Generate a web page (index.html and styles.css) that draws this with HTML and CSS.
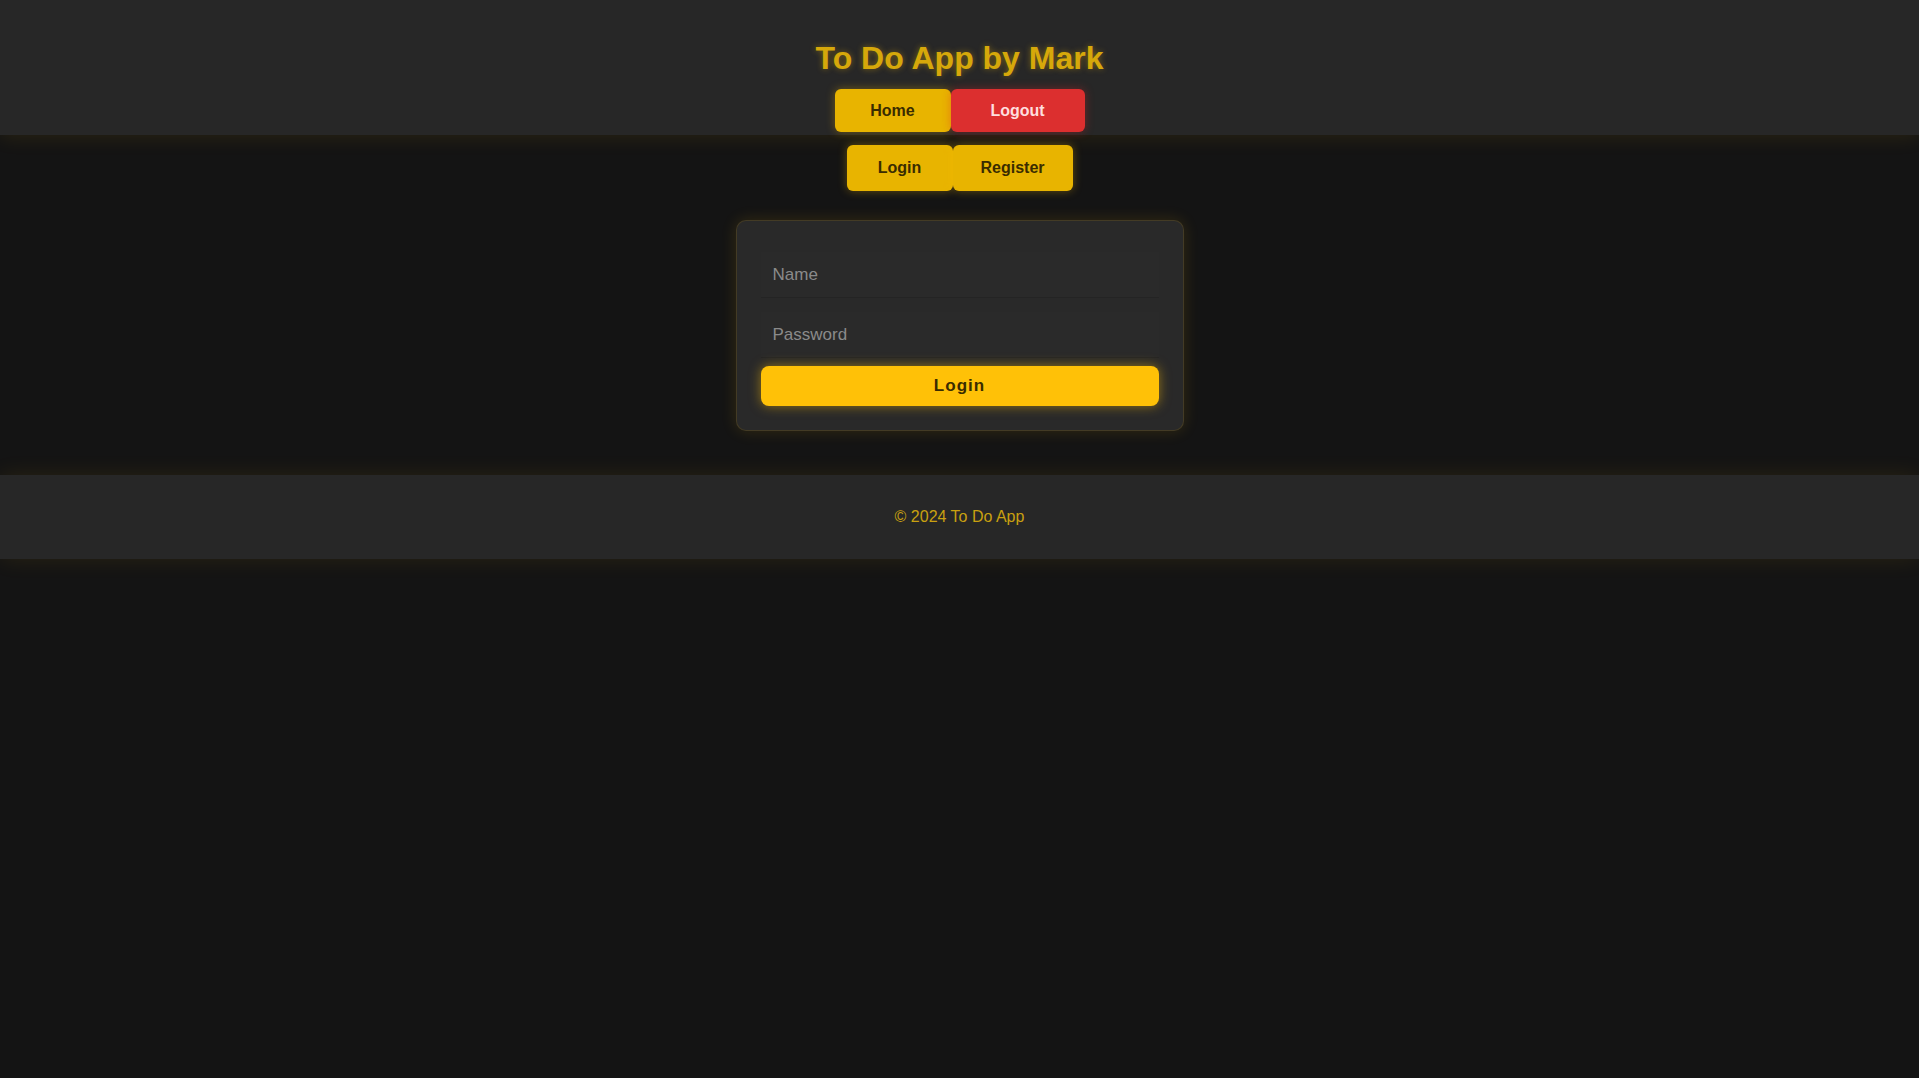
FILE: index.html
```html
<!DOCTYPE html>
<html lang="en">
<head>
<meta charset="utf-8">
<title>To Do App</title>
<link rel="stylesheet" href="styles.css">
</head>
<body>
<header class="site-header">
  <h1 class="title">To Do App by Mark</h1>
  <nav class="nav-row">
    <a class="btn btn-yellow nav-a">Home</a><a class="btn btn-red nav-b">Logout</a>
  </nav>
</header>
<div class="nav-row second">
  <a class="btn btn-yellow nav-c">Login</a><a class="btn btn-yellow nav-d">Register</a>
</div>
<main class="main">
  <form class="card">
    <input class="field" type="text" placeholder="Name">
    <input class="field" type="password" placeholder="Password">
    <button class="submit" type="button">Login</button>
  </form>
</main>
<footer class="site-footer">
  <p class="foot-text">© 2024 To Do App</p>
</footer>
</body>
</html>
```
FILE: styles.css
```css
* { box-sizing: border-box; }
html, body { margin: 0; padding: 0; }
body {
  background: #141414;
  font-family: "Liberation Sans", Arial, sans-serif;
  color: #ffc107;
  min-height: 1078px;
}
.site-header {
  background: #272727;
  height: 135px;
  box-shadow: 0 4px 18px rgba(255, 193, 7, 0.08);
  display: flex;
  flex-direction: column;
  align-items: center;
  padding-top: 39px;
  position: relative;
  z-index: 1;
}
.title {
  margin: 0;
  font-size: 32px;
  line-height: 38px;
  font-weight: bold;
  color: #d6a80a;
  text-shadow: 0 0 6px rgba(255, 193, 7, 0.4);
}
.nav-row {
  display: flex;
  justify-content: center;
  margin-top: 12px;
}
.nav-row.second {
  margin-top: 10px;
  position: relative;
  z-index: 2;
}
.btn {
  display: inline-flex;
  align-items: center;
  justify-content: center;
  height: 43px;
  font-size: 16px;
  font-weight: bold;
  border-radius: 6px;
  text-decoration: none;
  box-shadow: 0 0 10px rgba(255, 193, 7, 0.35);
}
.btn-yellow { background: #e8b400; color: #3a2c00; }
.btn-red { background: #dc2f2f; color: #ffdede; box-shadow: 0 0 10px rgba(220, 40, 40, 0.4); }
.nav-a { width: 116px; }
.nav-b { width: 134px; }
.nav-c { width: 106px; height: 46px; }
.nav-d { width: 120px; height: 46px; }
.main {
  display: flex;
  justify-content: center;
  padding-top: 29px;
  padding-bottom: 44px;
}
.card {
  width: 448px;
  background: #292929;
  border: 1px solid rgba(255, 193, 7, 0.12);
  border-radius: 10px;
  box-shadow: 0 0 16px rgba(255, 193, 7, 0.14);
  padding: 31px 24px 24px;
  display: flex;
  flex-direction: column;
  gap: 14px;
}
.field {
  height: 46px;
  background: #2a2a2a;
  border: none;
  border-bottom: 1px solid #242424;
  color: #ddd;
  font-family: "Liberation Sans", Arial, sans-serif;
  font-size: 17px;
  padding: 0 12px;
  outline: none;
}
.field::placeholder { color: #8a8a8a; }
.submit {
  height: 40px;
  margin-top: -6px;
  background: #ffc107;
  border: none;
  border-radius: 8px;
  color: #3a2c00;
  font-family: "Liberation Sans", Arial, sans-serif;
  font-size: 17px;
  font-weight: bold;
  letter-spacing: 1px;
  box-shadow: 0 0 12px rgba(255, 193, 7, 0.5);
}
.site-footer {
  background: #272727;
  height: 84px;
  display: flex;
  align-items: center;
  justify-content: center;
  box-shadow: 0 0 22px rgba(255, 193, 7, 0.09);
}
.foot-text {
  margin: 0;
  font-size: 16px;
  color: #c9a010;
}
```
